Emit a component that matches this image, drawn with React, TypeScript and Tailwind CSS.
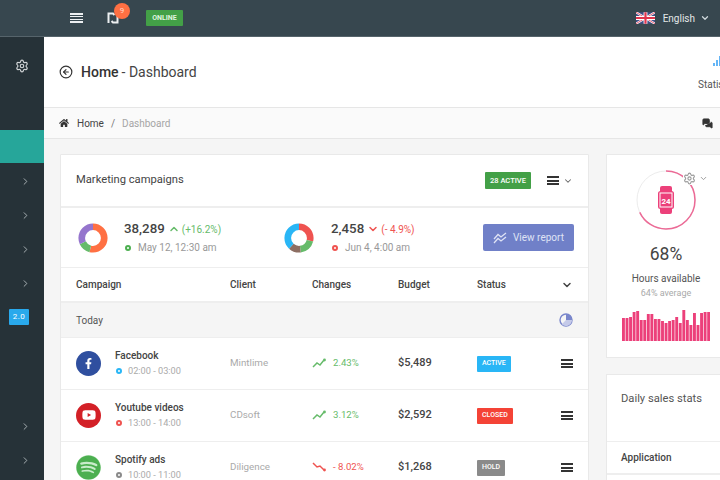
import React from 'react';
import { ChevronDown, ChevronRight, ChevronUp, Settings, ArrowLeftCircle, MessagesSquare } from 'lucide-react';
import { FaFacebookF, FaSpotify, FaYoutube, FaHome } from 'react-icons/fa';

const bars = [23, 23, 24, 29, 30, 21, 21, 27, 27, 22, 22, 20, 18, 20, 21, 24, 18, 31, 21, 16, 28, 16, 28, 29, 29];

const rows = [
  { name: 'Facebook', time: '02:00 - 03:00', client: 'Mintlime', change: '2.43%', up: true, budget: '$5,489', status: 'ACTIVE', statusBg: 'bg-[#29b6f6]', dot: 'border-[#29b6f6]', icon: 'fb' },
  { name: 'Youtube videos', time: '13:00 - 14:00', client: 'CDsoft', change: '3.12%', up: true, budget: '$2,592', status: 'CLOSED', statusBg: 'bg-[#f44336]', dot: 'border-[#ef5350]', icon: 'yt' },
  { name: 'Spotify ads', time: '10:00 - 11:00', client: 'Diligence', change: '- 8.02%', up: false, budget: '$1,268', status: 'HOLD', statusBg: 'bg-[#8a8a8a]', dot: 'border-[#8a8a8a]', icon: 'sp' },
];

const Burger = ({ className = '' }: { className?: string }) => (
  <div className={`flex flex-col justify-between w-[12px] h-[9px] ${className}`}>
    <div className="h-[2px] bg-current" />
    <div className="h-[2px] bg-current" />
    <div className="h-[2px] bg-current" />
  </div>
);

const Donut = ({ parts }: { parts: { color: string; len: number }[] }) => {
  let offset = 0;
  return (
    <svg width="30" height="30" viewBox="0 0 36 36" className="-rotate-90 shrink-0">
      {parts.map((p, i) => {
        const el = (
          <circle key={i} cx="18" cy="18" r="13.5" fill="none" stroke={p.color} strokeWidth="8" pathLength={100} strokeDasharray={`${p.len} ${100 - p.len}`} strokeDashoffset={-offset} />
        );
        offset += p.len;
        return el;
      })}
    </svg>
  );
};

const Dot = ({ className }: { className: string }) => (
  <span className={`block w-[6px] h-[6px] rounded-full border-2 ${className}`} />
);

const Trend = ({ up }: { up: boolean }) => (
  <svg width="14" height="12" viewBox="0 0 14 12" fill="none" stroke="currentColor" strokeWidth="1.5">
    {up ? <path d="M1 10L5 6L8 8L12 3" /> : <path d="M1 2L5 6L8 5L12 9" />}
    <circle cx="12.5" cy={up ? 3 : 9} r="1.4" fill="currentColor" stroke="none" />
  </svg>
);

const SideRow = () => (
  <div className="h-[34px] shrink-0 flex items-center justify-end pr-[13px] text-[#b0b8bb]">
    <ChevronRight size={11} />
  </div>
);

export default function App() {
  return (
    <div className="w-[720px] h-[480px] overflow-hidden bg-[#f5f5f5] text-[#333] font-['Roboto',sans-serif] flex flex-col">
      {/* Top bar */}
      <div className="h-[37px] shrink-0 bg-[#37474f] border-b border-[#56646b] flex items-center text-white">
        <div className="w-[70px]" />
        <div className="flex flex-col justify-between w-[13px] h-[11px]">
          <div className="h-[2px] bg-[#eceff1]" />
          <div className="h-[1px] bg-[#eceff1]" />
          <div className="h-[1px] bg-[#eceff1]" />
          <div className="h-[2px] bg-[#eceff1]" />
        </div>
        <div className="relative ml-[24px] w-[12px] h-[12px]">
          <svg width="12" height="12" viewBox="0 0 12 12" fill="none" stroke="#eceff1" strokeWidth="2">
            <path d="M1.5 11V1.5H6L7.5 3" />
            <path d="M10.5 1V10.5H6L4.5 9" />
          </svg>
          <span className="absolute -top-[9px] left-[7px] w-[16px] h-[16px] rounded-full bg-[#ff7043] text-[8px] text-[#ffd9c9] flex items-center justify-center">9</span>
        </div>
        <span className="ml-[27px] h-[16px] w-[37px] bg-[#43a047] rounded-[1px] text-[7px] font-bold flex items-center justify-center text-[#dff3df]">ONLINE</span>
        <div className="ml-auto flex items-center pr-[10px]">
          <svg width="19" height="12" viewBox="0 0 60 36" className="mr-[8px]">
            <rect width="60" height="36" fill="#3f4f86" />
            <path d="M0 0L60 36M60 0L0 36" stroke="#fff" strokeWidth="7" />
            <path d="M0 0L60 36M60 0L0 36" stroke="#e0344d" strokeWidth="2.5" />
            <path d="M30 0V36M0 18H60" stroke="#fff" strokeWidth="12" />
            <path d="M30 0V36M0 18H60" stroke="#e0344d" strokeWidth="7" />
          </svg>
          <span className="text-[10px] text-[#e3e7e9]">English</span>
          <ChevronDown size={10} strokeWidth={3} className="ml-[5px] text-[#cfd8dc]" />
        </div>
      </div>

      <div className="flex flex-1 min-h-0">
        {/* Sidebar */}
        <div className="w-[44px] shrink-0 bg-[#263238] flex flex-col overflow-hidden">
          <div className="h-[93px] shrink-0 pt-[22px] pl-[15px] text-[#cfd3d5]">
            <Settings size={14} />
          </div>
          <div className="h-[33px] shrink-0 bg-[#26a69a]" />
          <div className="h-[1px] shrink-0" />
          <SideRow />
          <SideRow />
          <SideRow />
          <SideRow />
          <div className="h-[34px] shrink-0 flex items-center justify-center pr-[6px]">
            <span className="w-[20px] h-[16px] bg-[#29a9ec] rounded-[1px] text-white text-[8px] tracking-[0.5px] flex items-center justify-center">2.0</span>
          </div>
          <div className="h-[75px] shrink-0" />
          <SideRow />
          <SideRow />
        </div>

        {/* Main */}
        <div className="flex-1 min-w-0 flex flex-col">
          <div className="h-[71px] shrink-0 bg-white border-b border-[#e6e6e6] flex items-center pl-[15px]">
            <ArrowLeftCircle size={14} className="text-[#333] mr-[8px]" />
            <span className="text-[14px] font-medium text-[#333]">Home</span>
            <span className="text-[14px] text-[#444] ml-[3px]">- Dashboard</span>
            <div className="ml-auto w-[22px] pt-[3px] flex flex-col items-start overflow-hidden">
              <svg width="8" height="10" viewBox="0 0 8 10" className="ml-[15px] shrink-0">
                <path d="M0 10V7H2V10ZM3 10V4H5V10ZM6 10V0H8V10Z" fill="#64b5f6" />
              </svg>
              <span className="text-[10px] text-[#555] mt-[11px] whitespace-nowrap">Statistics</span>
            </div>
          </div>

          <div className="h-[31px] shrink-0 bg-[#fafafa] border-b border-[#e6e6e6] flex items-center pl-[15px] text-[10px]">
            <FaHome size={10} className="text-[#333]" />
            <span className="ml-[8px] text-[#444]">Home</span>
            <span className="ml-[7px] text-[#777]">/</span>
            <span className="ml-[7px] text-[#a5a5a5]">Dashboard</span>
            <MessagesSquare size={11} fill="#333" className="ml-auto mr-[7px] text-[#333]" />
          </div>

          <div className="flex gap-[17px] pl-[16px] pt-[15px] items-start">
            {/* Campaigns card */}
            <div className="w-[529px] shrink-0 bg-white border border-[#e9e9e9] rounded-[1px]">
              <div className="h-[53px] flex items-center pl-[15px] pr-[15px] border-b-2 border-[#eeeeee]">
                <span className="text-[11.2px] text-[#444]">Marketing campaigns</span>
                <span className="ml-auto w-[46px] h-[17px] bg-[#43a047] rounded-[1px] text-white text-[7.5px] font-medium flex items-center justify-center">28 ACTIVE</span>
                <Burger className="ml-[16px] text-[#333]" />
                <ChevronDown size={10} strokeWidth={2.5} className="ml-[4px] text-[#666]" />
              </div>

              <div className="h-[60px] flex items-center pl-[17px] pr-[14px] border-b border-[#eeeeee]">
                <div className="w-[206px] flex items-center">
                  <Donut parts={[{ color: '#ff7043', len: 54 }, { color: '#66bb6a', len: 14 }, { color: '#9575cd', len: 32 }]} />
                  <div className="ml-[16px]">
                    <div className="flex items-center">
                      <span className="text-[13.3px] font-medium text-[#444] leading-[18px]">38,289</span>
                      <ChevronUp size={12} strokeWidth={3} className="ml-[3px] text-[#66bb6a]" />
                      <span className="ml-[2px] text-[10px] text-[#66bb6a]">(+16.2%)</span>
                    </div>
                    <div className="flex items-center mt-[2px]">
                      <Dot className="border-[#4caf50] ml-[1px]" />
                      <span className="ml-[7px] text-[10px] text-[#999]">May 12, 12:30 am</span>
                    </div>
                  </div>
                </div>
                <div className="flex items-center">
                  <Donut parts={[{ color: '#ef5350', len: 29 }, { color: '#66bb6a', len: 19 }, { color: '#8d6e63', len: 14 }, { color: '#29b6f6', len: 38 }]} />
                  <div className="ml-[17px]">
                    <div className="flex items-center">
                      <span className="text-[13.3px] font-medium text-[#444] leading-[18px]">2,458</span>
                      <ChevronDown size={12} strokeWidth={3} className="ml-[3px] text-[#ef5350]" />
                      <span className="ml-[2px] text-[10px] text-[#ef5350]">(- 4.9%)</span>
                    </div>
                    <div className="flex items-center mt-[2px]">
                      <Dot className="border-[#ef5350] ml-[1px]" />
                      <span className="ml-[7px] text-[10px] text-[#999]">Jun 4, 4:00 am</span>
                    </div>
                  </div>
                </div>
                <button className="ml-auto w-[91px] h-[27px] bg-[#7080c8] rounded-[2px] text-[#dfe3f5] flex items-center pl-[10px]">
                  <svg width="14" height="12" viewBox="0 0 14 12" fill="none" stroke="currentColor" strokeWidth="1.3">
                    <path d="M1 7L5 2.5L8 5L13 1" />
                    <path d="M1 11L5 6.5L8 9L13 5" />
                  </svg>
                  <span className="ml-[6px] text-[10px]">View report</span>
                </button>
              </div>

              <div className="grid grid-cols-[154px_82px_86px_79px_84px_1fr] items-center h-[35px] pl-[15px] border-b-2 border-[#eeeeee] text-[10px] font-medium text-[#444]">
                <span>Campaign</span>
                <span>Client</span>
                <span>Changes</span>
                <span>Budget</span>
                <span>Status</span>
                <ChevronDown size={12} strokeWidth={3} className="text-[#444]" />
              </div>

              <div className="h-[35px] flex items-center justify-between pl-[15px] pr-[15px] bg-[#f5f5f5] border-b border-[#eeeeee] text-[10px] text-[#555]">
                <span>Today</span>
                <svg width="14" height="14" viewBox="0 0 14 14">
                  <circle cx="7" cy="7" r="6" fill="none" stroke="#7986cb" strokeWidth="1.4" />
                  <path d="M7 7V1A6 6 0 0 1 13 7Z" fill="#7986cb" />
                  <path d="M7 7H13A6 6 0 0 1 2.8 11.2Z" fill="#c5cae9" />
                </svg>
              </div>

              {rows.map((r) => (
                <div key={r.name} className="grid grid-cols-[154px_82px_86px_79px_84px_1fr] items-center h-[52px] pl-[15px] border-b border-[#eeeeee]">
                  <div className="flex items-center">
                    {r.icon === 'fb' && (
                      <span className="w-[25px] h-[25px] rounded-full bg-[#2f4f9f] text-white flex items-center justify-center"><FaFacebookF size={11} /></span>
                    )}
                    {r.icon === 'yt' && (
                      <span className="w-[25px] h-[25px] rounded-full bg-[#d32027] text-white flex items-center justify-center"><FaYoutube size={14} /></span>
                    )}
                    {r.icon === 'sp' && (
                      <span className="w-[25px] h-[25px] rounded-full bg-[#c9eccb] text-[#4caf50] flex items-center justify-center"><FaSpotify size={25} /></span>
                    )}
                    <div className="ml-[14px]">
                      <div className="text-[10px] font-medium text-[#444] whitespace-nowrap leading-[14px]">{r.name}</div>
                      <div className="flex items-center mt-[1px]">
                        <Dot className={`${r.dot} ml-[1px]`} />
                        <span className="ml-[6px] text-[9.2px] text-[#aaa] whitespace-nowrap">{r.time}</span>
                      </div>
                    </div>
                  </div>
                  <span className="text-[9.8px] text-[#aaa]">{r.client}</span>
                  <div className={`flex items-center text-[9.6px] ${r.up ? 'text-[#66bb6a]' : 'text-[#ef5350]'}`}>
                    <Trend up={r.up} />
                    <span className="ml-[7px] whitespace-nowrap">{r.change}</span>
                  </div>
                  <span className="text-[11px] font-medium text-[#444]">{r.budget}</span>
                  <div className="flex items-center">
                    <span className={`flex items-center h-[16px] px-[5px] rounded-[1px] text-white text-[7px] font-medium ${r.statusBg}`}>{r.status}</span>
                  </div>
                  <Burger className="text-[#333]" />
                </div>
              ))}
            </div>

            {/* Right column */}
            <div className="w-[240px] shrink-0 flex flex-col gap-[16px]">
              <div className="relative h-[204px] bg-white border border-[#e9e9e9] pl-[9px] pt-[15px]">
                <div className="absolute left-[76px] top-[17px] flex items-center bg-white text-[#999]">
                  <Settings size={13} />
                  <ChevronDown size={9} strokeWidth={2.5} className="ml-[3px]" />
                </div>
                <div className="w-[100px] flex flex-col items-center">
                  <svg width="60" height="60" viewBox="0 0 60 60">
                    <circle cx="30" cy="30" r="29" fill="none" stroke="#ececec" strokeWidth="1" />
                    <circle cx="30" cy="30" r="29" fill="none" stroke="#ec6a96" strokeWidth="1.5" pathLength={100} strokeDasharray="68 32" transform="rotate(-90 30 30)" />
                    <rect x="24" y="16" width="12" height="28" rx="2" fill="#ec407a" />
                    <rect x="22" y="21" width="16" height="18" rx="2.5" fill="#ec407a" />
                    <rect x="24" y="23" width="12" height="14" fill="none" stroke="#fff" strokeWidth="1" />
                    <text x="30" y="33.5" textAnchor="middle" fontSize="8" fontWeight="700" fill="#fff">24</text>
                  </svg>
                  <div className="mt-[12px] text-[17.5px] text-[#444] leading-[24px]">68%</div>
                  <div className="mt-[6px] text-[10px] text-[#555] leading-[14px]">Hours available</div>
                  <div className="mt-[1px] text-[9px] text-[#aaa] leading-[13px]">64% average</div>
                  <svg width="88" height="32" viewBox="0 0 88 32" className="mt-[9px]">
                    {bars.map((h, i) => (
                      <rect key={i} x={i * 3.55} y={32 - h} width="2.9" height={h} fill="#ec407a" />
                    ))}
                  </svg>
                </div>
              </div>

              <div className="bg-white border border-[#e9e9e9]">
                <div className="h-[66px] pl-[14px] pt-[16px] text-[11.2px] text-[#555]">Daily sales stats</div>
                <div className="h-[34px] border-t border-b-2 border-[#eeeeee] pl-[14px] flex items-center text-[10px] font-medium text-[#444]">Application</div>
                <div className="h-[30px]" />
              </div>
            </div>
          </div>
        </div>
      </div>
    </div>
  );
}
